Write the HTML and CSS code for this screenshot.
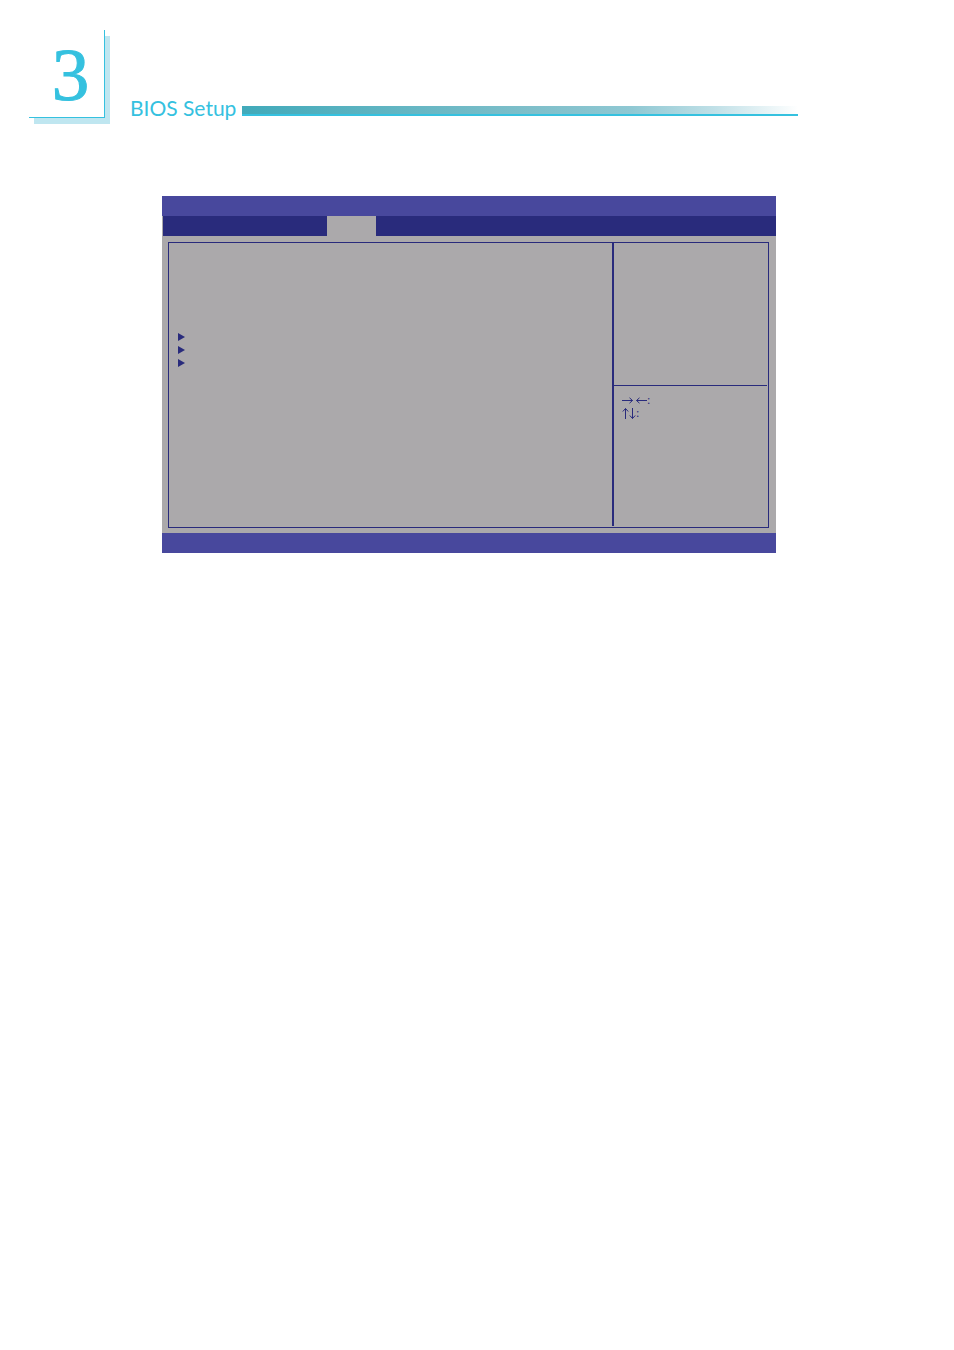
FILE: index.html
```
<!DOCTYPE html>
<html lang="en">
<head>
    <meta charset="UTF-8">
    <meta name="viewport" content="width=device-width, initial-scale=1.0">
    <title>BIOS Setup</title>
    <link rel="stylesheet" href="styles.css">
</head>
<body>
    <header class="header">
        <div class="chapter">3</div>
        <h1>BIOS Setup</h1>
        <div class="rule"></div>
    </header>

    <main class="bios">
        <div class="title-bar"></div>
        <div class="tabs">
            <div class="tab-active"></div>
        </div>
        <div class="screen">
            <div class="panel">
                <ul class="menu">
                    <li><svg width="7" height="8" viewBox="0 0 7 8"><path d="M0 0L7 4L0 8Z"/></svg></li>
                    <li><svg width="7" height="8" viewBox="0 0 7 8"><path d="M0 0L7 4L0 8Z"/></svg></li>
                    <li><svg width="7" height="8" viewBox="0 0 7 8"><path d="M0 0L7 4L0 8Z"/></svg></li>
                </ul>
                <aside class="side">
                    <div class="help"></div>
                    <div class="keys">
                        <div class="key">
                            <svg width="11" height="7" viewBox="0 0 11 7"><path d="M0 3.5H10.5M7.5 0.8L10.5 3.5L7.5 6.2"/></svg>
                            <svg class="left" width="11" height="7" viewBox="0 0 11 7"><path d="M11 3.5H0.5M3.5 0.8L0.5 3.5L3.5 6.2"/></svg>
                            <span>:</span>
                        </div>
                        <div class="key">
                            <svg width="7" height="11" viewBox="0 0 7 11"><path d="M3.5 11V0.5M0.8 3.5L3.5 0.5L6.2 3.5"/></svg>
                            <svg width="7" height="11" viewBox="0 0 7 11"><path d="M3.5 0V10.5M0.8 7.5L3.5 10.5L6.2 7.5"/></svg>
                            <span>:</span>
                        </div>
                    </div>
                </aside>
            </div>
        </div>
        <div class="footer-bar"></div>
    </main>
</body>
</html>
```

FILE: styles.css
```
* {
    box-sizing: border-box;
}
body {
    margin: 0;
    background: white;
    color: #35c1df;
    font-family: Lato, "Liberation Sans", sans-serif;
}
.header {
    display: flex;
    align-items: flex-end;
    padding: 30px 156px 0 29px;
}
.chapter {
    width: 76px;
    height: 88px;
    padding-left: 8px;
    border-right: 1px solid #35c1df;
    border-bottom: 1px solid #35c1df;
    background: white;
    box-shadow: 5px 6px 0 #bfe6f0;
    font-family: "Liberation Serif", serif;
    font-size: 75px;
    line-height: 90px;
    text-align: center;
    -webkit-text-stroke: 1px #35c1df;
}
h1 {
    width: 112px;
    margin: 0 0 0 25px;
    font-size: 21px;
    font-weight: normal;
    line-height: 20px;
    white-space: nowrap;
}
.rule {
    flex: 1;
    height: 10px;
    margin-bottom: 2px;
    border-bottom: 2px solid #35c1df;
    background: linear-gradient(to right, #41aaba, #7fbfca 52%, #8fc8d3 70%, #c0e0e7 85%, white);
}
.bios {
    margin: 78px 178px 0 162px;
    background: #aba9ab;
}
.title-bar,
.footer-bar {
    height: 20px;
    background: #48489d;
}
.tabs {
    height: 20px;
    margin-left: 1px;
    padding-left: 164px;
    background: #292b7c;
}
.tab-active {
    width: 49px;
    height: 20px;
    background: #aba9ab;
}
.screen {
    padding: 6px 7px 5px 6px;
}
.panel {
    display: flex;
    min-height: 286px;
    border: 1px solid #292b7c;
    color: #292b7c;
}
.menu {
    flex: 1;
    margin: 0;
    padding: 87px 9px 0;
    list-style: none;
}
.menu li {
    display: flex;
    align-items: center;
    height: 13px;
}
.menu svg {
    fill: #292b7c;
}
.side {
    width: 156px;
    margin-bottom: 1px;
    padding-right: 1px;
    border-left: 2px solid #292b7c;
}
.help {
    height: 143px;
    border-bottom: 1px solid #292b7c;
}
.keys {
    padding: 8px;
    font-family: "Liberation Serif", serif;
    font-size: 12px;
    line-height: 13px;
}
.key {
    display: flex;
    align-items: center;
    height: 13px;
}
.key svg {
    fill: none;
    stroke: #292b7c;
}
.key .left {
    margin-left: 3px;
}
```
